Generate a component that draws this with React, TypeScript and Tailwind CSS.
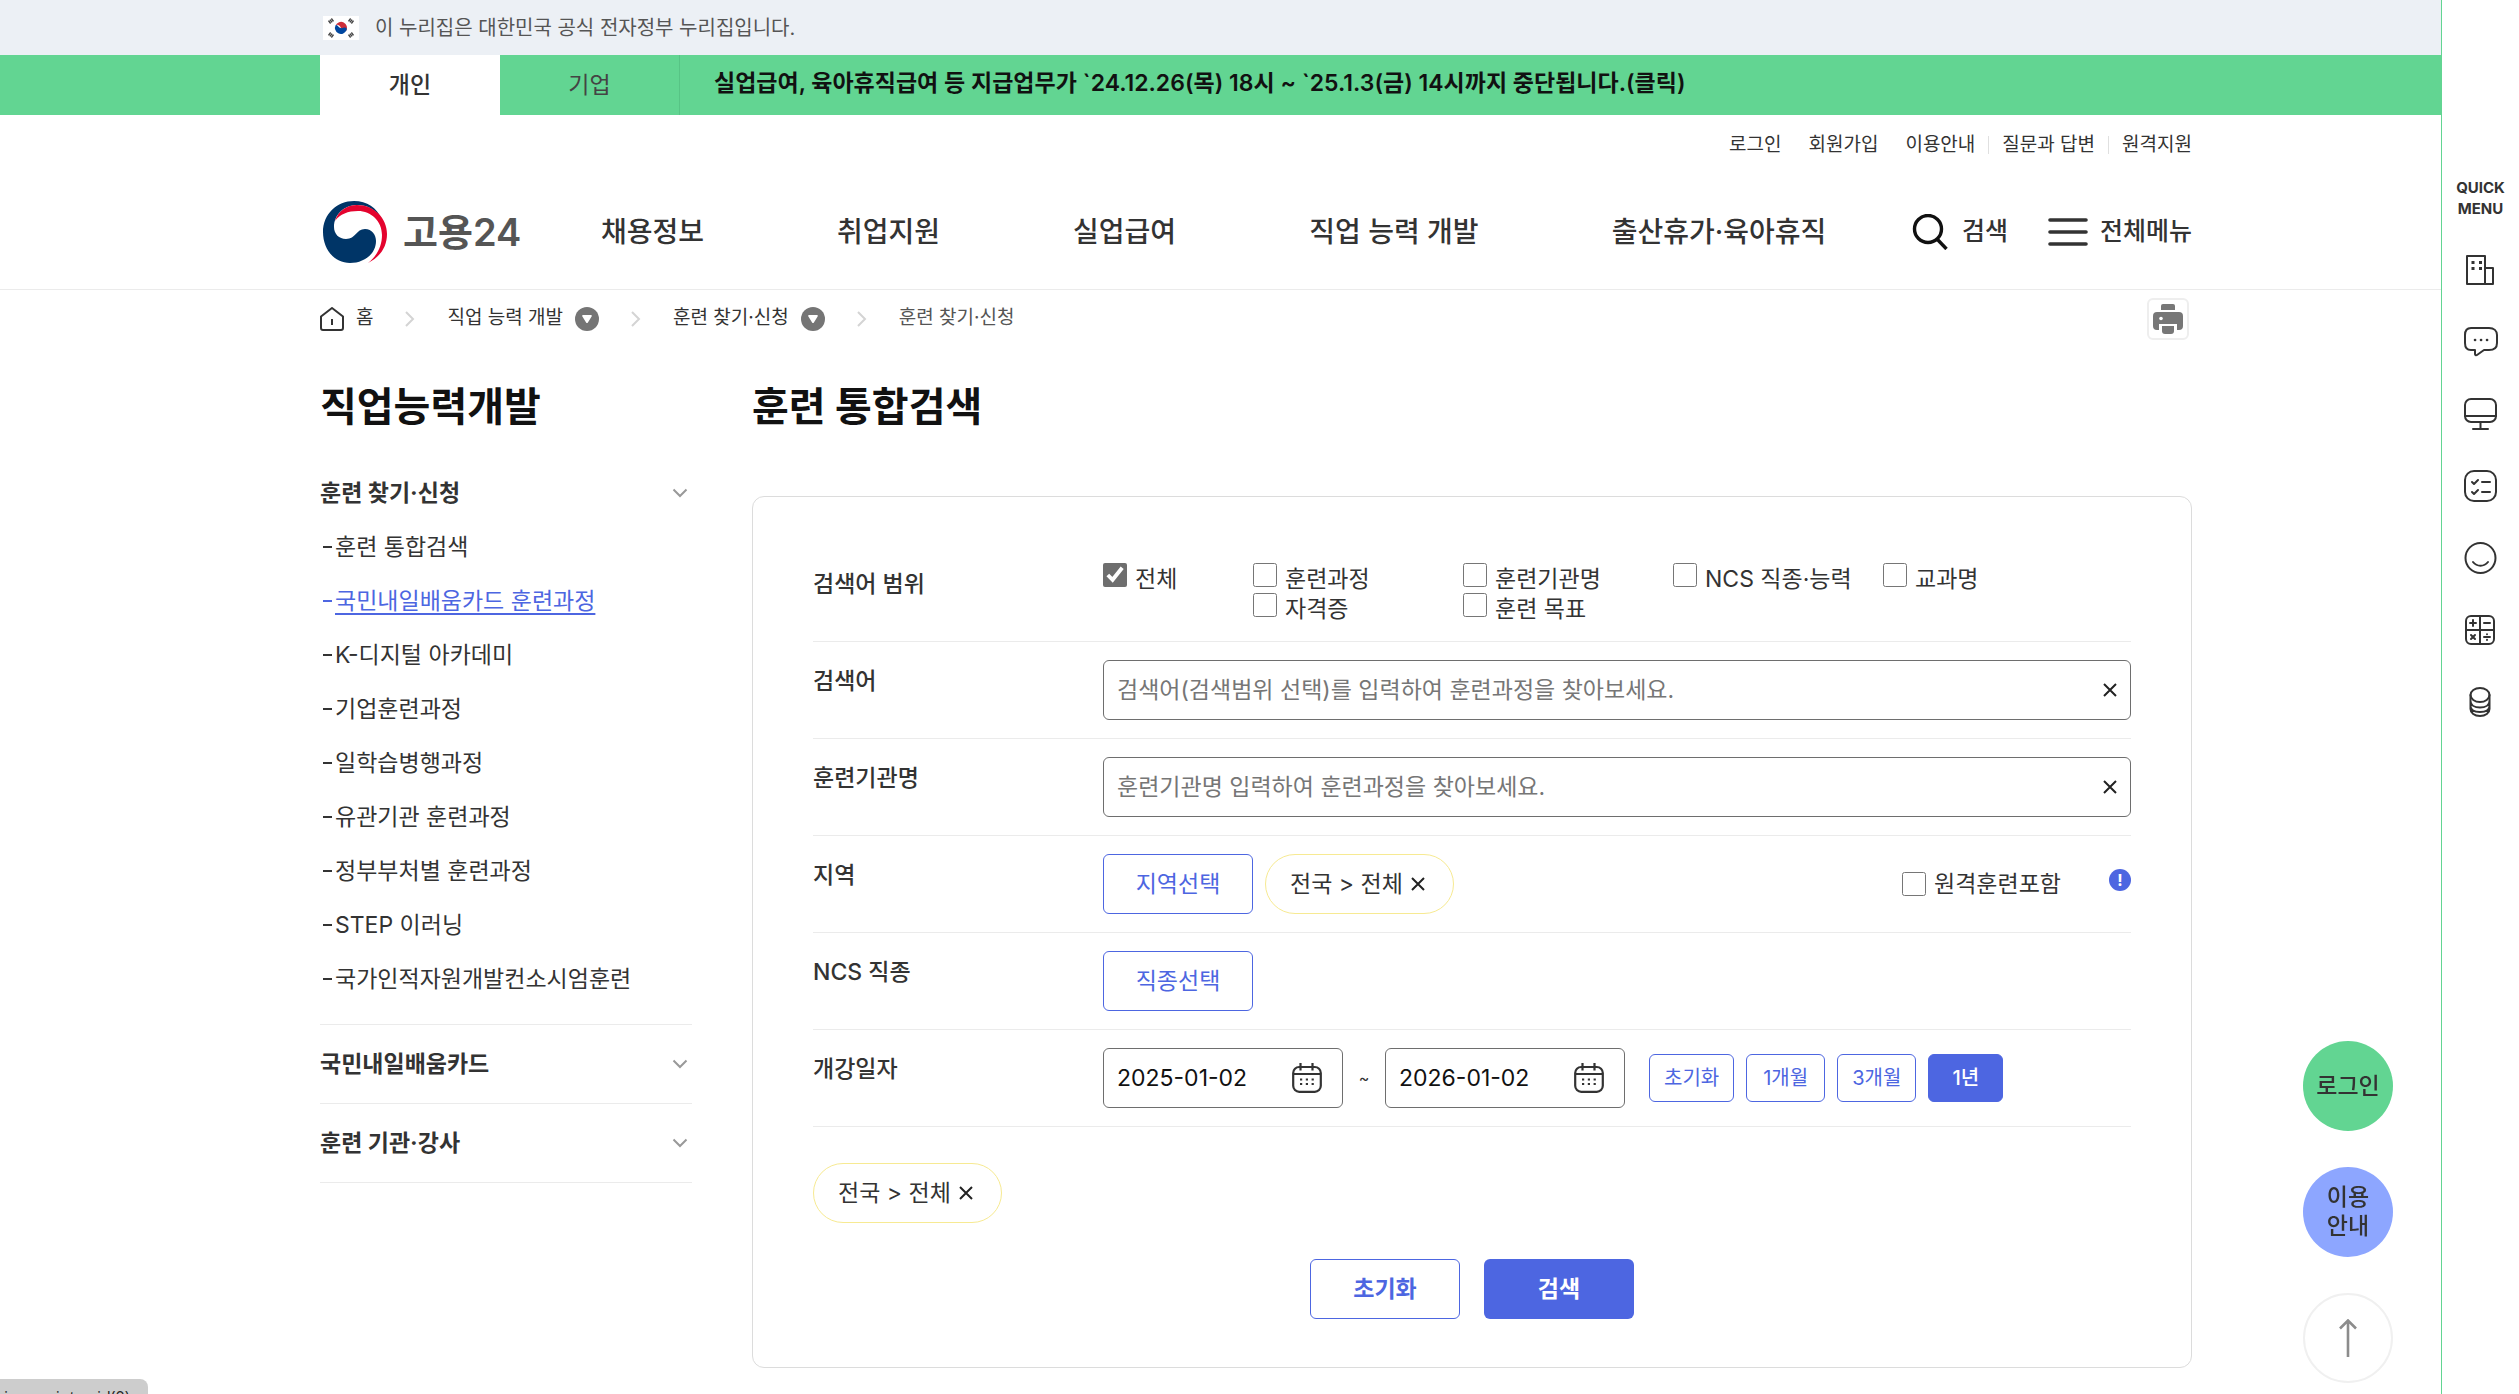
import { ReactNode, useState } from 'react';

const utilityLinks = [
  { label: '로그인', divider: false },
  { label: '회원가입', divider: false },
  { label: '이용안내', divider: false },
  { label: '질문과 답변', divider: true },
  { label: '원격지원', divider: true },
];

const mainMenu = ['채용정보', '취업지원', '실업급여', '직업 능력 개발', '출산휴가·육아휴직'];

const trainingMenu = [
  '훈련 통합검색',
  '국민내일배움카드 훈련과정',
  'K-디지털 아카데미',
  '기업훈련과정',
  '일학습병행과정',
  '유관기관 훈련과정',
  '정부부처별 훈련과정',
  'STEP 이러닝',
  '국가인적자원개발컨소시엄훈련',
];

const searchScopes = ['전체', '훈련과정', '훈련기관명', 'NCS 직종·능력', '교과명', '자격증', '훈련 목표'];

const periods = ['초기화', '1개월', '3개월', '1년'];

const FlagIcon = () => (
  <svg viewBox="0 0 36 24" className="w-9 h-6" aria-hidden="true">
    <rect width="36" height="24" fill="#fff" />
    <path d="M12.6 9.2a6 6 0 0 1 10.8 5.4c-1.6 1.6-4 .8-5.4-2.6s-4.2-4-5.4-2.8z" fill="#cd2e3a" />
    <path d="M12.6 9.2a6 6 0 0 0 10.8 5.4c1.2-2-.4-3.400-2.4-3-2.2.4-2.6 1-4.2.2s-2.8-3.4-4.2-2.6z" fill="#0047a0" />
    <path
      d="M6 6.500 10 3.500M26 3.500l4 3M6 17.500l4 3M26 20.500l4-3"
      stroke="#444"
      strokeWidth="3.600"
      strokeDasharray="1.400 .4"
    />
  </svg>
);

const EmblemIcon = () => (
  <svg viewBox="0 0 64 62" className="w-16 h-[62px]" aria-hidden="true">
    <path
      d="M0 31C0 13 14 0 31 0c13 0 23 7 27 17C52 8 44 4 34 4 21 4 11 14 11 26c0 7 5 12 12 12 10 0 10-10 19-10 7 0 11 6 11 12 0 13-12 22-26 22C11 62 0 48 0 31z"
      fill="#003567"
    />
    <path
      d="M12 20C15 10 24 4 34 4c17 0 30 13 30 29 0 13-7 23-19 29 9-7 14-17 14-28 0-14-11-24-24-24-10 0-18 3-23 10z"
      fill="#e4032e"
    />
  </svg>
);

const SearchIcon = () => (
  <svg viewBox="0 0 36 36" className="size-9" fill="none" stroke="#111" strokeWidth="3.400" aria-hidden="true">
    <circle cx="16" cy="15" r="13.500" />
    <path d="m25 25 9.500 10" />
  </svg>
);

const MenuIcon = () => (
  <svg viewBox="0 0 40 28" className="w-10 h-7" stroke="#333" strokeWidth="3.600" strokeLinecap="round" aria-hidden="true">
    <path d="M2 2h36M2 14h36M2 26h36" />
  </svg>
);

const HomeIcon = () => (
  <svg viewBox="0 0 24 24" className="size-6" fill="none" stroke="#333" strokeWidth="2" strokeLinejoin="round" aria-hidden="true">
    <path d="M1 9.500 12 1l11 8.500V21a2 2 0 0 1-2 2H3a2 2 0 0 1-2-2z" />
    <path d="M12 12v6" />
  </svg>
);

const ArrowRight = () => (
  <svg viewBox="0 0 10 16" className="w-[10px] h-4" fill="none" stroke="#d4d4d4" strokeWidth="2" aria-hidden="true">
    <path d="m1 1 7 7-7 7" />
  </svg>
);

const ChevronDown = () => (
  <svg viewBox="0 0 16 10" className="w-4 h-[10px]" fill="none" stroke="#999" strokeWidth="2" aria-hidden="true">
    <path d="m1.500 1.500 6.500 6.500 6.500-6.500" />
  </svg>
);

const CloseIcon = () => (
  <svg viewBox="0 0 14 14" className="size-[14px]" stroke="#222" strokeWidth="2" aria-hidden="true">
    <path d="M1 1l12 12M13 1L1 13" />
  </svg>
);

const PrinterIcon = () => (
  <svg viewBox="0 0 30 30" className="size-[30px]" fill="#777" aria-hidden="true">
    <path d="M10 0h10a2 2 0 0 1 2 2v4H8V2a2 2 0 0 1 2-2z" />
    <path d="M4 8h22a4 4 0 0 1 4 4v10a4 4 0 0 1-4 4h-2v-6H6v6H4a4 4 0 0 1-4-4V12a4 4 0 0 1 4-4z" />
    <path d="M9 22h12v5a3 3 0 0 1-3 3h-6a3 3 0 0 1-3-3z" />
    <circle cx="8" cy="14.500" r="1.800" fill="#fff" />
  </svg>
);

const CalendarIcon = () => (
  <svg viewBox="0 0 30 30" className="size-[30px]" fill="none" stroke="#333" strokeWidth="2.200" aria-hidden="true">
    <rect x="1.200" y="4" width="27.600" height="24.800" rx="6" />
    <path d="M1 11h28M8.500 0v7.500M20.500 0v7.500" />
    <path d="M8 16.500h14M8 21h14" strokeDasharray="2.200 3.600" />
  </svg>
);

const UpIcon = () => (
  <svg viewBox="0 0 18 38" className="w-[18px] h-[38px]" fill="none" stroke="#8c8c8c" strokeWidth="2.600" aria-hidden="true">
    <path d="M9 2v36M1 9.500l8-8 8 8" />
  </svg>
);

const RailSvg = ({ children }: { children: ReactNode }) => (
  <svg
    viewBox="0 0 36 36"
    className="size-9"
    fill="none"
    stroke="#333"
    strokeWidth="2"
    strokeLinecap="round"
    strokeLinejoin="round"
    aria-hidden="true"
  >
    {children}
  </svg>
);

const quickMenu = [
  {
    label: '기업',
    icon: (
      <RailSvg>
        <path d="M5 4h18v28H5zM23 16h8v16h-8" />
        <path d="M9.500 10.500h3M17 10.500h3M9.500 16.500h3M17 16.500h3" strokeWidth="3" strokeLinecap="butt" />
      </RailSvg>
    ),
  },
  {
    label: '상담',
    icon: (
      <RailSvg>
        <path d="M9 4h18c5 0 8 3 8 7v8c0 5-3 7-8 7h-5l-7 5c-1 .7-2 0-2-1v-4H9c-5 0-6-3-6-7v-8c0-4 2-7 6-7z" />
        <path d="M13 16h.1M19 16h.1M25 16h.1" strokeWidth="2.600" />
      </RailSvg>
    ),
  },
  {
    label: '온라인',
    icon: (
      <RailSvg>
        <rect x="3" y="3" width="31" height="23" rx="6" />
        <path d="M3 20h31M18.500 26v7M11 33h15" />
      </RailSvg>
    ),
  },
  {
    label: '체크리스트',
    icon: (
      <RailSvg>
        <rect x="3" y="3" width="31" height="30" rx="9" />
        <path d="m10 14 2 2 4-4M20 14h8M10 24l2 2 4-4M20 24h8" />
      </RailSvg>
    ),
  },
  {
    label: '만족도',
    icon: (
      <RailSvg>
        <circle cx="18.500" cy="18" r="15" />
        <path d="M11 22c4 5 11 5 15 0" />
      </RailSvg>
    ),
  },
  {
    label: '모의계산',
    icon: (
      <RailSvg>
        <rect x="4" y="4" width="28" height="28" rx="5" />
        <path d="M18 4v28M4 18h28" />
        <path d="M8 11h6M11 8v6M22 11h6M9 23l4 4M13 23l-4 4M22 25h6M25 22.200v.1M25 27.800v.1" />
      </RailSvg>
    ),
  },
  {
    label: '지원금',
    icon: (
      <RailSvg>
        <ellipse cx="18" cy="11" rx="9.500" ry="7" />
        <path d="M8.500 11v14c0 4 4 7 9.500 7s9.500-3 9.500-7V11M8.500 17c0 4 4 6.500 9.500 6.500s9.500-2.500 9.500-6.500M8.500 22c0 4 4 6 9.500 6s9.500-2 9.500-6" />
      </RailSvg>
    ),
  },
];

const Container = ({ className = '', children }: { className?: string; children: ReactNode }) => (
  <div className="pr-[7px]">
    <div className={`mx-auto w-full max-w-[1872px] ${className}`}>{children}</div>
  </div>
);

const TopBars = () => {
  return (
    <>
      <div className="bg-[#ecf0f5]">
        <Container className="flex items-center gap-4 h-[55px] pl-[3px]">
          <FlagIcon />
          <span className="text-[20px] text-[#555]">이 누리집은 대한민국 공식 전자정부 누리집입니다.</span>
        </Container>
      </div>
      <div className="bg-[#62d592]">
        <Container className="flex items-stretch h-[60px]">
          <a href="#personal" className="flex items-center justify-center w-[180px] bg-white font-medium">
            개인
          </a>
          <a
            href="#company"
            className="flex items-center justify-center w-[180px] border-r border-[#57c485] text-[#444]"
          >
            기업
          </a>
          <a href="#notice" className="flex items-center pl-[34px] pb-1 font-semibold text-[#111]">
            실업급여, 육아휴직급여 등 지급업무가 `24.12.26(목) 18시 ~ `25.1.3(금) 14시까지 중단됩니다.(클릭)
          </a>
        </Container>
      </div>
    </>
  );
};

const Header = () => {
  return (
    <header className="border-b border-[#ebebeb]">
      <Container className="flex flex-col h-[174px]">
        <ul className="flex justify-end items-center h-[60px] text-[19px]">
          {utilityLinks.map(({ label, divider }) => (
            <li key={label} className="flex items-center">
              <span className={`w-px h-[18px] mx-[13px] ${divider ? 'bg-[#e0e0e0]' : 'bg-transparent'}`} />
              <a href="#utility">{label}</a>
            </li>
          ))}
        </ul>
        <div className="flex items-center h-[114px]">
          <a href="#home" className="flex items-center gap-4 w-[281px] pl-[3px]">
            <EmblemIcon />
            <span className="text-[38px] leading-none font-semibold text-[#555]">고용24</span>
          </a>
          <nav className="flex gap-[133px] text-[28px] font-medium whitespace-nowrap">
            {mainMenu.map((item) => (
              <a key={item} href="#menu">
                {item}
              </a>
            ))}
          </nav>
          <div className="flex items-center gap-10 ml-auto text-[25px] font-medium whitespace-nowrap">
            <button type="button" className="flex items-center gap-[14px]">
              <SearchIcon />
              검색
            </button>
            <button type="button" className="flex items-center gap-3">
              <MenuIcon />
              전체메뉴
            </button>
          </div>
        </div>
      </Container>
    </header>
  );
};

const CrumbToggle = () => (
  <button type="button" aria-label="하위 메뉴" className="flex items-center justify-center size-6 rounded-full bg-[#757575]">
    <svg viewBox="0 0 10 8" className="w-[10px] h-2" fill="#fff" aria-hidden="true">
      <path d="M1.200 0h7.600c.9 0 1.300.9.8 1.600L5.900 7.400c-.4.7-1.400.7-1.800 0L.4 1.600C-.1.900.3 0 1.200 0z" />
    </svg>
  </button>
);

const Breadcrumb = () => {
  return (
    <div className="flex items-center justify-between h-[57px] pr-[3px] text-[19px]">
      <div className="flex items-center gap-8">
        <a href="#home" className="flex items-center gap-3">
          <HomeIcon />홈
        </a>
        <ArrowRight />
        <span className="flex items-center gap-3">
          직업 능력 개발
          <CrumbToggle />
        </span>
        <ArrowRight />
        <span className="flex items-center gap-3">
          훈련 찾기·신청
          <CrumbToggle />
        </span>
        <ArrowRight />
        <span className="text-[#555]">훈련 찾기·신청</span>
      </div>
      <button
        type="button"
        aria-label="인쇄"
        className="flex items-center justify-center size-[42px] border-2 border-[#eee] rounded-md"
      >
        <PrinterIcon />
      </button>
    </div>
  );
};

const SideMenuTitle = ({ children }: { children: ReactNode }) => (
  <button type="button" className="flex items-center justify-between w-full h-[78px] pr-1 font-bold">
    {children}
    <ChevronDown />
  </button>
);

const SideMenu = () => {
  return (
    <aside className="w-[372px] shrink-0">
      <h2 className="text-[40px] leading-[60px] font-bold text-[#111]">직업능력개발</h2>
      <div className="pt-[17px] pb-[18px] border-b border-[#ebebeb]">
        <SideMenuTitle>훈련 찾기·신청</SideMenuTitle>
        <ul className="-mt-3">
          {trainingMenu.map((item, i) => (
            <li key={item} className={`flex items-center h-[54px] ${i === 1 ? 'text-[#4d66e1]' : ''}`}>
              <span className="w-[9px] h-[2px] mx-[3px] bg-current" />
              <a href="#training" className={i === 1 ? 'underline decoration-2 underline-offset-4' : ''}>
                {item}
              </a>
            </li>
          ))}
        </ul>
      </div>
      <div className="border-b border-[#ebebeb]">
        <SideMenuTitle>국민내일배움카드</SideMenuTitle>
      </div>
      <div className="border-b border-[#ebebeb]">
        <SideMenuTitle>훈련 기관·강사</SideMenuTitle>
      </div>
    </aside>
  );
};

const FormRow = ({ label, htmlFor, children }: { label: string; htmlFor?: string; children: ReactNode }) => (
  <div className="flex border-b border-[#ebebeb] py-[18px]">
    <label htmlFor={htmlFor} className="w-[290px] shrink-0 pt-1 leading-[34px] font-medium">
      {label}
    </label>
    <div className="flex items-center flex-1 min-h-[60px]">{children}</div>
  </div>
);

const ClearableInput = ({ id, placeholder }: { id: string; placeholder: string }) => {
  const [value, setValue] = useState('');

  return (
    <div className="flex items-center w-full h-[60px] px-[13px] border border-[#6e6e6e] rounded-md">
      <input
        id={id}
        type="text"
        value={value}
        onChange={(e) => setValue(e.target.value)}
        placeholder={placeholder}
        className="flex-1 outline-none placeholder:text-[#767676]"
      />
      <button type="button" aria-label="지우기" onClick={() => setValue('')}>
        <CloseIcon />
      </button>
    </div>
  );
};

const DateInput = ({ label, value }: { label: string; value: string }) => (
  <div className="flex items-center w-[240px] h-[60px] pl-[13px] pr-5 border border-[#6e6e6e] rounded-md">
    <input type="text" aria-label={label} defaultValue={value} className="flex-1 min-w-0 outline-none text-[#111]" />
    <button type="button" aria-label="달력">
      <CalendarIcon />
    </button>
  </div>
);

const RegionChip = () => (
  <span className="inline-flex items-center gap-2 h-[60px] px-6 border border-[#f7ea92] rounded-full">
    전국 &gt; 전체
    <button type="button" aria-label="삭제" className="pr-1">
      <CloseIcon />
    </button>
  </span>
);

const outlineButton = 'w-[150px] h-[60px] border border-[#4d66e1] rounded-md text-[#4d66e1]';

const SearchForm = () => {
  const [period, setPeriod] = useState('1년');

  return (
    <form className="px-[60px] py-12 border border-[#dcdcdc] rounded-xl">
      <FormRow label="검색어 범위">
        <div className="grid grid-cols-[150px_repeat(4,210px)] w-full">
          {searchScopes.map((scope, i) => (
            <label key={scope} className={`flex h-[30px] gap-2 ${i === 5 ? 'col-start-2' : ''}`}>
              <input type="checkbox" defaultChecked={i === 0} className="size-6 accent-[#6e6e6e]" />
              <span className="leading-[32px] whitespace-nowrap">{scope}</span>
            </label>
          ))}
        </div>
      </FormRow>
      <FormRow label="검색어" htmlFor="keyword">
        <ClearableInput id="keyword" placeholder="검색어(검색범위 선택)를 입력하여 훈련과정을 찾아보세요." />
      </FormRow>
      <FormRow label="훈련기관명" htmlFor="organ">
        <ClearableInput id="organ" placeholder="훈련기관명 입력하여 훈련과정을 찾아보세요." />
      </FormRow>
      <FormRow label="지역" htmlFor="region">
        <button id="region" type="button" className={outlineButton}>
          지역선택
        </button>
        <span className="ml-3">
          <RegionChip />
        </span>
        <label className="flex items-center gap-2 ml-auto">
          <input type="checkbox" className="size-6" />
          원격훈련포함
        </label>
        <button
          type="button"
          aria-label="도움말"
          className="flex items-center justify-center size-[22px] mb-2 ml-12 rounded-full bg-[#4d66e1] text-[16px] leading-none font-bold text-white"
        >
          !
        </button>
      </FormRow>
      <FormRow label="NCS 직종" htmlFor="ncs">
        <button id="ncs" type="button" className={outlineButton}>
          직종선택
        </button>
      </FormRow>
      <FormRow label="개강일자">
        <DateInput label="시작일" value="2025-01-02" />
        <span className="w-[42px] text-center text-[16px]">~</span>
        <DateInput label="종료일" value="2026-01-02" />
        <div className="flex gap-3 ml-6 text-[20px]">
          {periods.map((item) => (
            <button
              key={item}
              type="button"
              onClick={() => setPeriod(item)}
              className={`h-12 px-[14px] border border-[#4d66e1] rounded-md ${
                item === period ? 'min-w-[75px] bg-[#4d66e1] font-medium text-white' : 'min-w-[79px] text-[#4d66e1]'
              }`}
            >
              {item}
            </button>
          ))}
        </div>
      </FormRow>
      <div className="flex pt-9">
        <RegionChip />
      </div>
      <div className="flex justify-center gap-6 pt-9 font-semibold">
        <button type="reset" className={outlineButton}>
          초기화
        </button>
        <button type="submit" className="w-[150px] h-[60px] rounded-md bg-[#4d66e1] text-white">
          검색
        </button>
      </div>
    </form>
  );
};

const QuickRail = () => {
  return (
    <aside className="fixed top-0 right-0 bottom-0 flex flex-col items-center w-[78px] pt-[177px] bg-white border-l border-[#62d592]">
      <strong className="text-[15px] leading-[21px] text-center">
        QUICK
        <br />
        MENU
      </strong>
      <div className="flex flex-col gap-9 pt-[33px] pr-[2px]">
        {quickMenu.map(({ label, icon }) => (
          <a key={label} href="#quick" aria-label={label}>
            {icon}
          </a>
        ))}
      </div>
    </aside>
  );
};

const FloatingButtons = () => {
  return (
    <div className="fixed right-[126px] bottom-[11px] flex flex-col gap-9 font-medium leading-[29px] text-center">
      <a href="#login" className="flex items-center justify-center size-[90px] rounded-full bg-[#62d592]">
        로그인
      </a>
      <a href="#guide" className="flex items-center justify-center size-[90px] rounded-full bg-[#8da6ff]">
        이용
        <br />
        안내
      </a>
      <a
        href="#top"
        aria-label="맨 위로"
        className="flex items-center justify-center size-[90px] rounded-full bg-white border-2 border-[#f0f0f0]"
      >
        <UpIcon />
      </a>
    </div>
  );
};

const App = () => {
  return (
    <div className="min-h-screen bg-white font-['Inter','Noto_Sans_CJK_KR',sans-serif] text-[23px] leading-normal text-[#333]">
      <TopBars />
      <Header />
      <Container>
        <Breadcrumb />
        <main className="flex gap-[60px] pt-[30px] pb-[26px]">
          <SideMenu />
          <section className="flex-1 min-w-0">
            <h1 className="mb-[59px] text-[40px] leading-[60px] font-bold text-[#111]">훈련 통합검색</h1>
            <SearchForm />
          </section>
        </main>
      </Container>
      <FloatingButtons />
      <QuickRail />
      <div className="fixed left-0 bottom-0 w-[148px] h-[15px] pl-1 pt-[6px] overflow-hidden rounded-tr-lg bg-[#cdcdcd] font-['Open_Sans',sans-serif] text-[16px] text-[#222]">
        javascript:void(0)
      </div>
    </div>
  );
};

export default App;
